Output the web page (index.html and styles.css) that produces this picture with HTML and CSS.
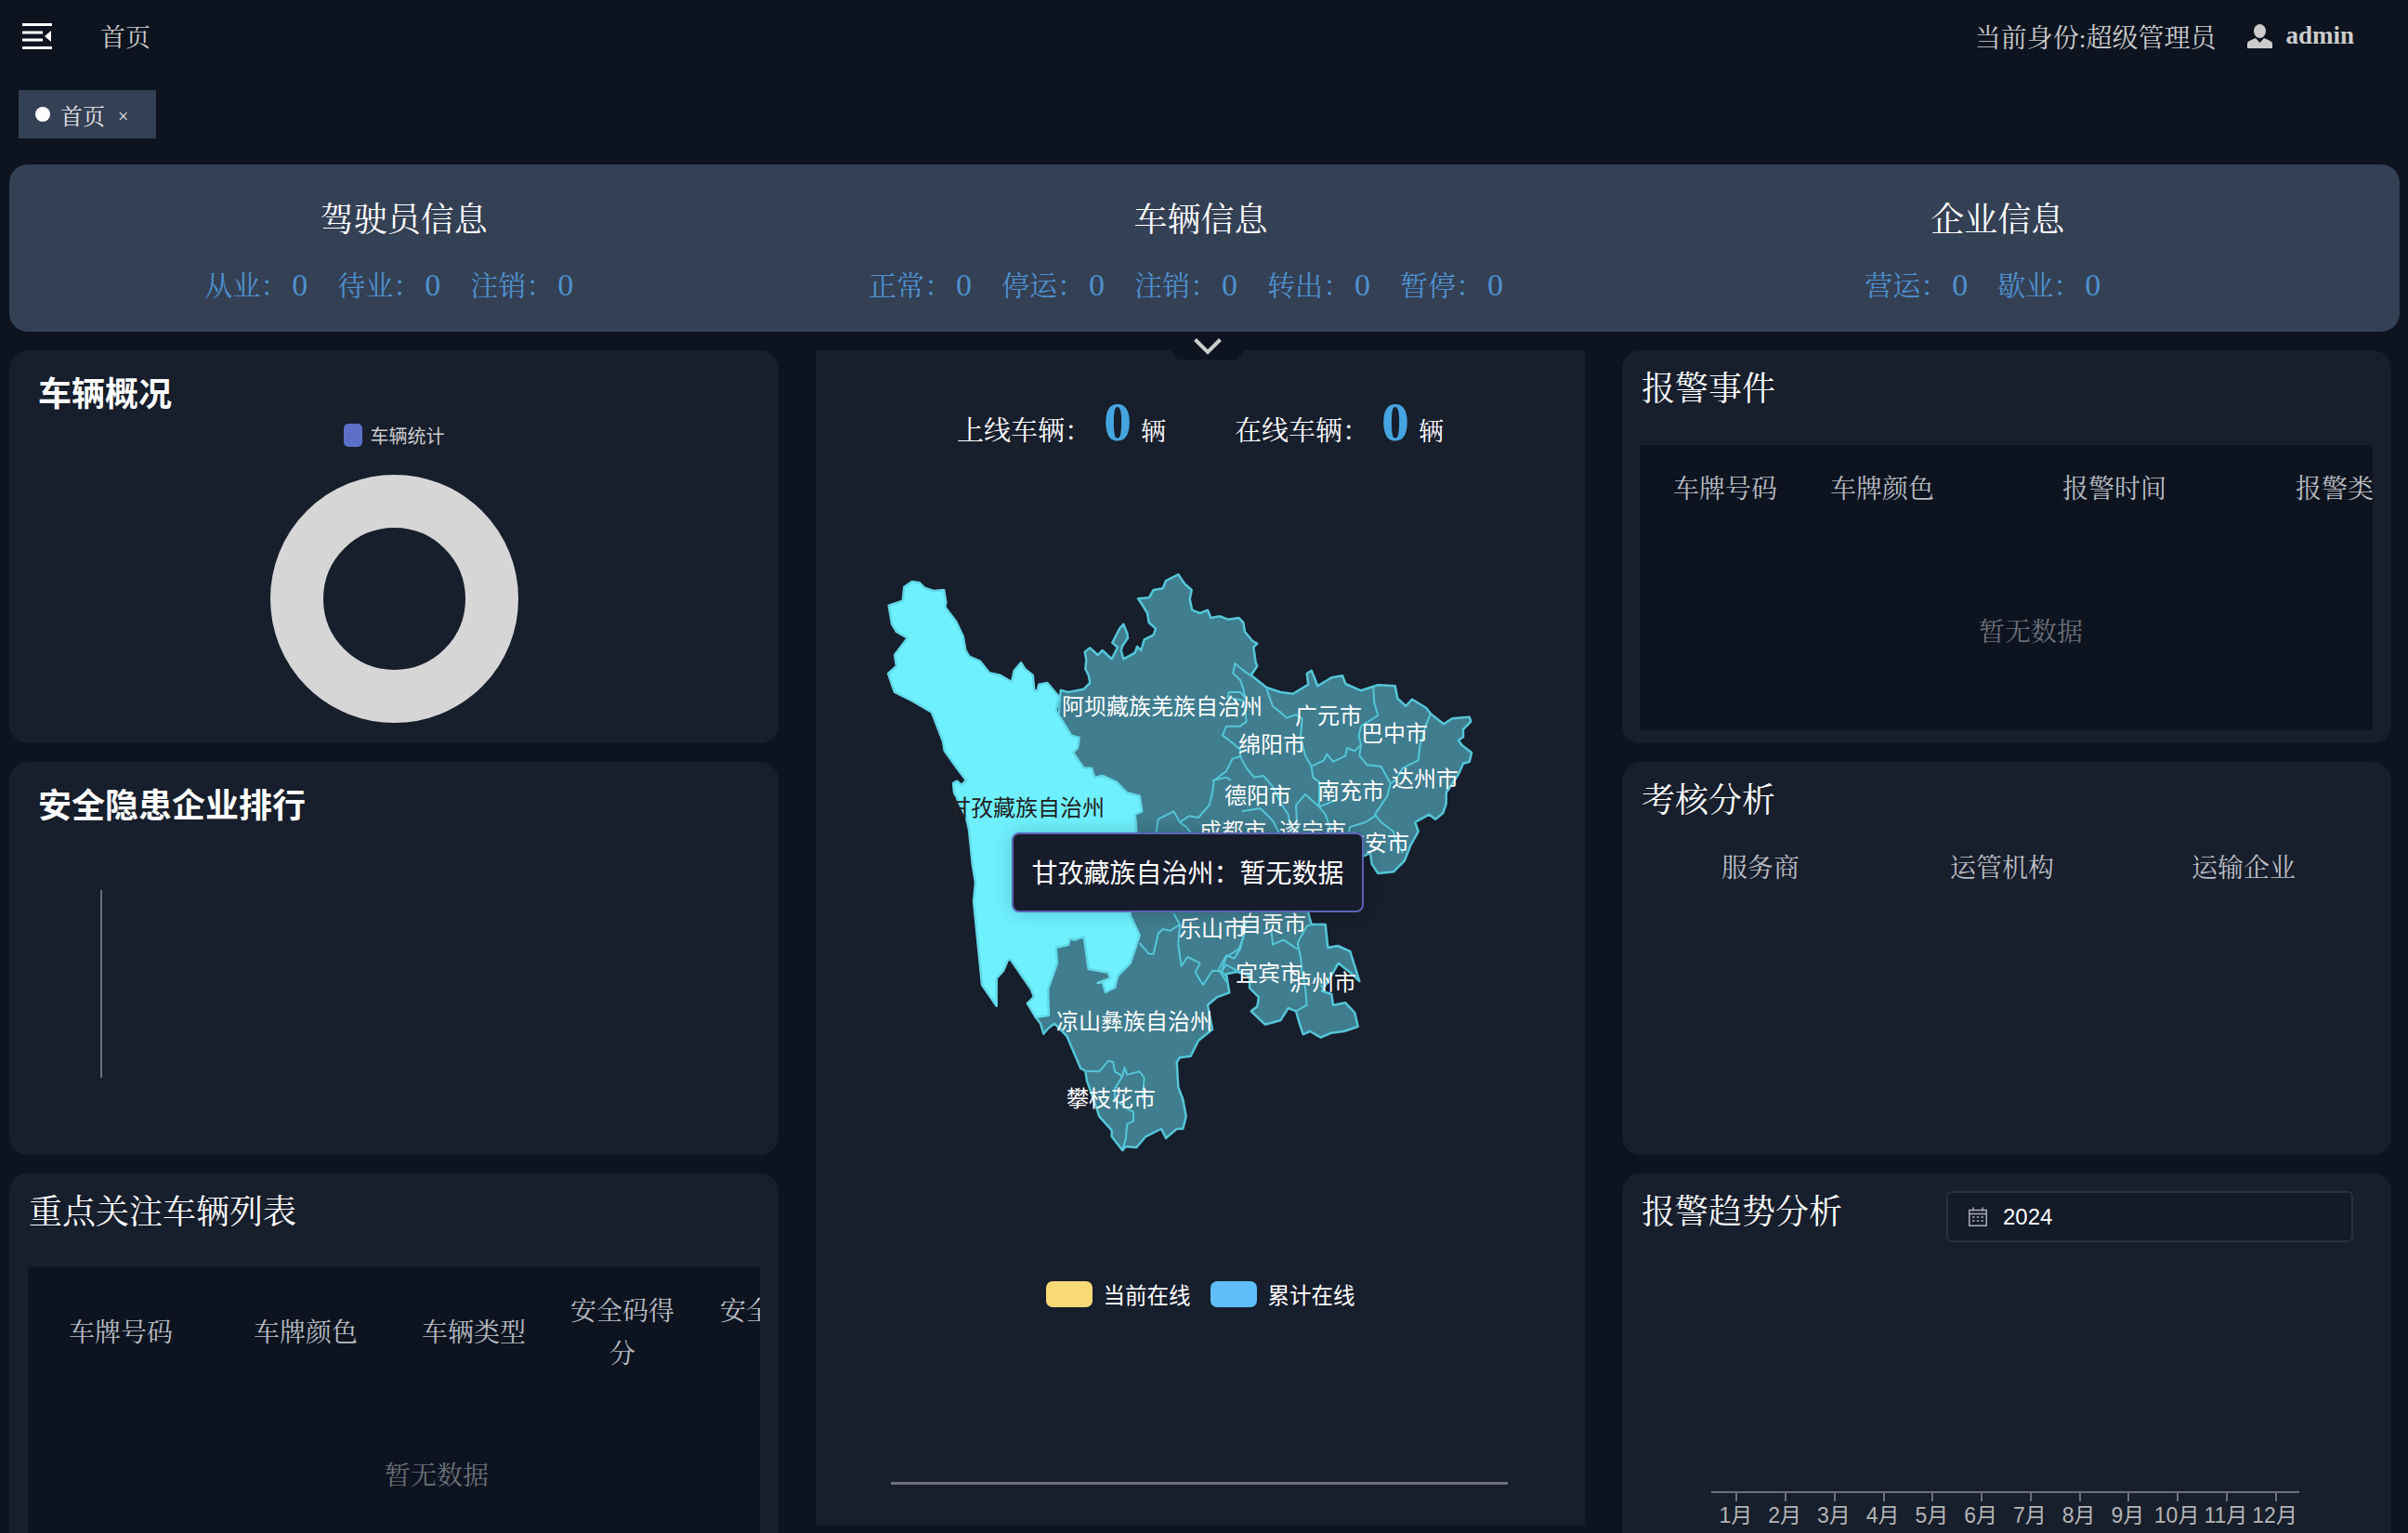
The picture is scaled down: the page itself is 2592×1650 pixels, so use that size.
FILE: index.html
```html
<!DOCTYPE html>
<html lang="zh-CN">
<head>
    <meta charset="UTF-8">
    <title>首页</title>
    <link rel="stylesheet" href="styles.css">
</head>
<body>
    <!-- Top bar -->
    <header class="topbar">
        <div class="topbar-left">
            <svg class="fold-icon" width="32" height="28" viewBox="0 0 32 28">
                <path d="M0 0h32v3H0zM0 8.500h22v3H0zM0 16.500h22v3H0zM0 25h32v3H0z" fill="#fff"/>
                <path d="M31 8v12l-7-6z" fill="#fff"/>
            </svg>
            <span class="crumb">首页</span>
        </div>
        <div class="topbar-right">
            <span class="role">当前身份:超级管理员</span>
            <svg class="user-icon" width="27" height="26" viewBox="0 0 27 26">
                <ellipse cx="13.500" cy="7.500" rx="6.500" ry="7.500" fill="#ccc"/>
                <path d="M0 26v-5c0-3 5-4 9-6l4.500 5 4.500-5c4 2 9 3 9 6v5z" fill="#ccc"/>
            </svg>
            <span class="user-name">admin</span>
        </div>
    </header>

    <!-- Tags -->
    <div class="tags">
        <div class="tag"><i class="tag-dot"></i>首页<span class="tag-close">×</span></div>
    </div>

    <!-- Summary banner -->
    <section class="banner">
        <div class="banner-item">
            <h2>驾驶员信息</h2>
            <div class="banner-stats">
                <span>从业：<b>0</b></span><span>待业：<b>0</b></span><span>注销：<b>0</b></span>
            </div>
        </div>
        <div class="banner-item">
            <h2>车辆信息</h2>
            <div class="banner-stats">
                <span>正常：<b>0</b></span><span>停运：<b>0</b></span><span>注销：<b>0</b></span><span>转出：<b>0</b></span><span>暂停：<b>0</b></span>
            </div>
        </div>
        <div class="banner-item">
            <h2>企业信息</h2>
            <div class="banner-stats">
                <span>营运：<b>0</b></span><span>歇业：<b>0</b></span>
            </div>
        </div>
    </section>

    <main class="board">
        <!-- Left column -->
        <div class="column">
            <section class="card">
                <h3 class="card-title-bold">车辆概况</h3>
                <div class="donut-legend"><i></i>车辆统计</div>
                <div class="donut"></div>
            </section>
            <section class="card">
                <h3 class="card-title-bold">安全隐患企业排行</h3>
                <div class="rank-axis"></div>
            </section>
            <section class="card">
                <h3 class="card-title">重点关注车辆列表</h3>
                <div class="table table-focus">
                    <div class="table-head">
                        <div>车牌号码</div><div>车牌颜色</div><div>车辆类型</div><div>安全码得分</div><div>安全码状态</div>
                    </div>
                    <div class="table-empty">暂无数据</div>
                </div>
            </section>
        </div>

        <!-- Center column -->
        <section class="card card-center">
            <div class="collapse-tab">
                <svg width="30" height="18" viewBox="0 0 30 18"><path d="M1.500 1.500L15 15 28.500 1.500" fill="none" stroke="#ccc" stroke-width="4"/></svg>
            </div>
            <div class="online-stats">
                <div class="online-item">上线车辆：<b>0</b><span>辆</span></div>
                <div class="online-item">在线车辆：<b>0</b><span>辆</span></div>
            </div>

            <div class="map">
                <svg width="660" height="640" viewBox="940 610 660 640">
                    <!-- province -->
                    <path class="map-land" d="M1141.700 743L1150 745 1166.700 741.700 1173.300 735 1171.700 726.700 1168.300 720 1169.300 710 1167.700 701.700 1173.300 697.300 1181.700 705 1186.700 700 1196.700 709.300 1203 696.700 1197.300 691.700 1205 676.700 1209.300 671.700 1213.300 681.700 1214 686.700 1208.300 695 1206.700 700 1209.300 709.300 1221.700 702.700 1224 696 1228.300 700 1231.700 688.300 1241.700 683.300 1244 676.700 1236.700 670 1235 660 1230 651.700 1225 644.300 1236.700 643.300 1241.700 635 1251.700 633.300 1255 625 1268.300 618.300 1275 628.300 1282.700 635 1280.700 645 1283.300 656.700 1291.700 660 1300 656.700 1303.300 665 1313.300 663.300 1321.700 666.700 1333.300 665 1338.300 670 1340 680 1348.300 690 1353.300 692.700 1349.300 696.700 1351.700 713.300 1353.300 716.700 1346.700 726.700 1363.300 740 1378.300 745 1391.700 746.700 1408.300 736.700 1406.700 725 1411.700 721.700 1418.300 738.300 1433.300 729.300 1445 727.300 1448.300 736 1465 743.300 1483.300 737.300 1501.700 738.300 1504.300 751.700 1513.300 760 1520 752.700 1535 761.700 1540 768.300 1554 779.300 1563.300 773.300 1581.700 771.700 1583.300 776.700 1575 785 1575 793.300 1570 796.700 1573.300 801.700 1584 810 1581.700 820 1575 821.700 1570 833.300 1556.700 853.300 1556.700 865 1553.300 875 1545 881.700 1538.300 876.700 1523.300 885 1526.700 895 1518.300 910 1511.700 926.700 1500 938.300 1483.300 940 1476.700 930 1475 918 1460 925 1408 981.700 1411.700 995 1426.700 995 1429.300 1020 1440 1018 1453.300 1024 1458.300 1040 1463.300 1056 1453.300 1046.700 1440.700 1036.700 1433 1050 1423 1066.700 1433.300 1070 1435 1081.700 1448.300 1079.300 1458.300 1090 1461.700 1105 1446.700 1110 1433.300 1111.700 1421.700 1116.700 1410 1110 1402.700 1113.300 1398.300 1100 1395 1088.300 1386.700 1085 1378.300 1098.300 1361.700 1102.700 1346.700 1088.300 1353.300 1083.300 1355 1073.300 1345 1063.300 1345 1050 1331.700 1046 1320 1048.300 1323.300 1068.300 1310 1073.300 1300 1081.700 1305 1108 1290 1120 1281.700 1136.700 1270 1138.300 1266.700 1143.300 1268.300 1170 1273.300 1183.300 1276.700 1201.700 1273.300 1215 1266.700 1215 1255 1225 1250 1215 1233.300 1223.300 1223.300 1235 1211.700 1234 1208.300 1238.300 1196.700 1223.300 1196.700 1216.700 1183.300 1201.700 1178.300 1186.700 1170 1163.300 1168.300 1152.700 1163.300 1150 1153.300 1126.700 1148.300 1115 1135 1101.700 1128.300 1106.700 1123.300 1112.700 1120 1101.700 1115 1095Z"/>

                    <!-- county borders, in crop units of the map quadrants -->
                    <g transform="translate(1270 610) scale(.3333)">
                        <path class="map-line" d="M230 352L205 335 178 312 172 345 195 365 205 395 212 425 195 405 158 405 155 422 205 432 212 470 215 500 195 515 150 515 138 545 165 565 195 590 195 612 170 620 150 660 110 690 105 730 95 770 60 810 30 805 0 825 20 840 35 858M0 825L-20 790 -70 815 -75 850 -80 880"/>
                        <path class="map-line" d="M280 395L300 450 325 470 345 488 375 478 395 490 390 550 405 610 425 645 465 625 475 605 495 630 535 610 540 585 565 595 585 575 578 545 585 515 640 480 628 440 625 390"/>
                        <path class="map-line" d="M585 575L580 610 605 640 650 645 680 700M810 475L795 510 775 580 770 625 720 650 695 690 680 700 670 740 630 800 650 825 690 855 695 880 720 925M630 805L600 825 550 840 545 858M425 645L430 680 450 695 450 775"/>
                        <path class="map-line" d="M195 612L215 650 240 680 270 675 300 710 330 770 350 800 360 858M105 690L150 680 165 690M200 790L260 780 300 820 320 858M380 855L375 770 405 735 450 775 470 800 490 858M450 775L500 755"/>
                    </g>
                    <g transform="translate(1000 930) scale(.3333)">
                        <path class="map-line" d="M680 255L710 290 725 290 740 225 755 210 780 215 810 195 805 260 815 330 835 300 875 320 860 350 885 390 915 345 945 345 965 370M945 345L960 300 1000 275 1015 240 1025 180M810 195L790 160"/>
                        <path class="map-line" d="M510 668L550 670 580 635 595 640 600 670 625 685 600 725 600 760 640 790 660 800 660 830 640 840 635 890 625 920M630 655L640 680 680 670 695 690 690 760M625 685L632 655"/>
                    </g>
                    <g transform="translate(1270 900) scale(.3333)">
                        <path class="map-line" d="M380 345L390 390 395 440 405 490 410 545 375 565M295 300L300 350 335 335 380 365M380 345L410 290 425 285M205 320L195 365 175 395 150 385 125 430 150 470M135 435L150 415 185 435 225 450M470 500L455 480"/>
                    </g>

                    <!-- highlighted region -->
                    <path class="map-active" d="M973.300 631.700L981.700 626 990 627.300 995 632.700 1005 636 1016 635 1018.300 648.300 1017.300 653.300 1029.300 669.300 1036.700 685 1039.300 700 1043.300 706.700 1055 711.700 1065 724.300 1076.700 726.700 1089 734 1091.700 721.700 1099 713.300 1103.300 720 1111.700 726.700 1113.300 743.300 1116.700 743.300 1118.300 736.700 1127.300 735 1140 750 1136.700 765 1146 780 1153.300 791.700 1161.700 794 1160 805 1155 810 1166.700 826.700 1175 826.700 1178.300 836.700 1186.700 835 1201.700 841.700 1213.300 853.300 1226.700 856.700 1229.300 873.300 1221.700 876.700 1223.300 893 1216.700 985 1226.700 1006.700 1216.700 1036.700 1203.300 1050 1200 1063 1190 1068 1186.700 1056.700 1181.700 1058 1195 1053 1193 1046.700 1171.700 1043 1166.700 1008 1156.700 1011.700 1151.700 1010 1150 1017 1136.700 1020 1138 1036.700 1128 1065 1129 1092.700 1115 1095 1106 1080 1113 1073 1110 1065 1088 1033 1085 1033 1080 1045 1072.700 1053 1072.700 1082.700 1057 1060 1054 1030 1048 970 1050 950 1046.700 930 1043 893 1040 880 1027 853 1026 843 1030 840.700 1035 845 1040 840 1030 826.700 1016.700 808 1015 798 1003 766.700 983 755 963 745 956 725 965 717 963 705 976.700 686.700 965 680 960 671.700 956.700 651.700 971.700 646.700Z"/>

                    <!-- labels -->
                    <text x="1251" y="769">阿坝藏族羌族自治州</text>
                    <text x="1430" y="779">广元市</text>
                    <text x="1501" y="798">巴中市</text>
                    <text x="1369" y="810">绵阳市</text>
                    <text x="1534" y="847">达州市</text>
                    <text x="1454" y="860">南充市</text>
                    <text x="1354" y="865">德阳市</text>
                    <text x="1327" y="903">成都市</text>
                    <text x="1413" y="903">遂宁市</text>
                    <text x="1481" y="916">广安市</text>
                    <text class="map-label-active" x="1105" y="878">甘孜藏族自治州</text>
                    <text x="1305" y="1008">乐山市</text>
                    <text x="1370" y="1003">自贡市</text>
                    <text x="1366" y="1056">宜宾市</text>
                    <text x="1424" y="1066">泸州市</text>
                    <text x="1221" y="1108">凉山彝族自治州</text>
                    <text x="1196" y="1191">攀枝花市</text>
                </svg>
                <div class="map-tooltip">甘孜藏族自治州：暂无数据</div>
            </div>

            <div class="map-legend">
                <div class="map-legend-item"><i class="swatch-yellow"></i>当前在线</div>
                <div class="map-legend-item"><i class="swatch-blue"></i>累计在线</div>
            </div>
            <div class="center-axis"></div>
        </section>

        <!-- Right column -->
        <div class="column">
            <section class="card">
                <h3 class="card-title">报警事件</h3>
                <div class="table table-alarm">
                    <div class="table-head">
                        <div>车牌号码</div><div>车牌颜色</div><div>报警时间</div><div>报警类型</div>
                    </div>
                    <div class="table-empty">暂无数据</div>
                </div>
            </section>
            <section class="card">
                <h3 class="card-title">考核分析</h3>
                <div class="tabs">
                    <div>服务商</div><div>运管机构</div><div>运输企业</div>
                </div>
            </section>
            <section class="card">
                <div class="trend-head">
                    <h3 class="card-title">报警趋势分析</h3>
                    <div class="year-picker">
                        <svg width="20" height="21" viewBox="0 0 20 21" fill="none" stroke="#aab" stroke-width="1.500">
                            <path d="M.800 3.500h18.400v16.700H.800zM.800 7.500h18.400M5 .500v4M15 .500v4"/>
                            <path d="M4 11h2.500M8.800 11h2.500M13.500 11H16M4 15h2.500M8.800 15h2.500M13.500 15H16"/>
                        </svg>
                        2024
                    </div>
                </div>
                <div class="month-axis">
                    <div>1月</div><div>2月</div><div>3月</div><div>4月</div><div>5月</div><div>6月</div>
                    <div>7月</div><div>8月</div><div>9月</div><div>10月</div><div>11月</div><div>12月</div>
                </div>
            </section>
        </div>
    </main>
</body>
</html>
```

FILE: styles.css
```css
/* Reset */
body, h2, h3 {
    margin: 0;
    padding: 0;
}

body {
    width: 2592px;
    height: 1650px;
    overflow: hidden;
    background-color: #0d1420;
    color: #fff;
    font-family: "Liberation Serif", "Noto Serif CJK SC", "Noto Sans CJK SC", serif;
    font-size: 28px;
}

h2, h3 {
    font-weight: normal;
}

/* Top bar */
.topbar {
    height: 97px;
    box-sizing: border-box;
    padding: 0 58px 20px 24px;
    display: flex;
    align-items: center;
    justify-content: space-between;
    color: #ccc;
    font-size: 27px;
}

.topbar-left,
.topbar-right {
    display: flex;
    align-items: center;
}

.crumb {
    margin-left: 52px;
}

.role {
    font-size: 28px;
}

.user-icon {
    margin-left: 34px;
}

.user-name {
    margin-left: 14px;
    font-weight: bold;
}

/* Tags */
.tags {
    padding-left: 20px;
    height: 80px;
}

.tag {
    width: 148px;
    height: 52px;
    box-sizing: border-box;
    padding-left: 18px;
    display: flex;
    align-items: center;
    background-color: #344054;
    color: #e6e6e6;
    font-size: 24px;
}

.tag-dot {
    width: 16px;
    height: 16px;
    margin-right: 11px;
    border-radius: 50%;
    background-color: #fff;
}

.tag-close {
    margin: 4px 0 0 14px;
    font-size: 20px;
}

/* Banner */
.banner {
    width: 2573px;
    height: 180px;
    margin-left: 10px;
    display: grid;
    grid-template-columns: repeat(3, 1fr);
    border-radius: 20px;
    background-color: #344054;
}

.banner-item {
    padding-right: 8px;
    text-align: center;
}

.banner-item h2 {
    margin-top: 38px;
    font-size: 36px;
    line-height: 44px;
}

.banner-stats {
    margin-top: 27px;
    display: flex;
    justify-content: center;
    color: #4f90cf;
    font-size: 30px;
    line-height: 44px;
}

.banner-stats span {
    margin-right: 32px;
}

.banner-stats b {
    margin-left: 4px;
    font-size: 34px;
    font-weight: normal;
    line-height: 1;
}

/* Board */
.board {
    margin: 20px 0 0 10px;
    display: grid;
    grid-template-columns: repeat(3, 828px);
    column-gap: 40px;
    align-items: start;
}

.column {
    display: flex;
    flex-direction: column;
    gap: 20px;
}

.card {
    position: relative;
    height: 423px;
    flex-shrink: 0;
    border-radius: 20px;
    background-color: #171e2c;
}

.card-title {
    padding: 24px 0 0 21px;
    font-size: 36px;
    line-height: 36px;
}

.card-title-bold {
    padding: 26px 0 0 31px;
    font-family: "Noto Sans CJK SC", sans-serif;
    font-size: 36px;
    font-weight: bold;
    line-height: 36px;
}

/* Vehicle donut */
.donut-legend {
    margin-top: 17px;
    display: flex;
    align-items: center;
    justify-content: center;
    color: #ccc;
    font-family: "Noto Sans CJK SC", sans-serif;
    font-size: 20px;
    line-height: 25px;
}

.donut-legend i {
    width: 20px;
    height: 25px;
    margin-right: 9px;
    border-radius: 5px;
    background-color: #5b6fc9;
}

.donut {
    width: 267px;
    height: 267px;
    box-sizing: border-box;
    margin: 30px auto 0;
    border: 57px solid #d6d6d6;
    border-radius: 50%;
}

.rank-axis {
    width: 2px;
    height: 202px;
    margin: 76px 0 0 98px;
    background-color: #6e7079;
}

/* Tables */
.table {
    overflow: hidden;
    background-color: #0d1420;
    color: #b9bcc2;
}

.table-head {
    display: grid;
    align-items: center;
    text-align: center;
    line-height: 46px;
}

.table-head div {
    padding: 0 20px;
}

.table-empty {
    display: flex;
    align-items: center;
    justify-content: center;
    color: #6b6f78;
}

.table-focus {
    width: 788px;
    height: 340px;
    margin: 41px 0 0 20px;
}

.table-focus .table-head {
    grid-template-columns: 200px 198px 164px 156px 166px;
    height: 142px;
}

.table-focus .table-empty {
    width: 880px;
    height: 160px;
}

.table-alarm {
    width: 789px;
    height: 307px;
    margin: 42px 0 0 19px;
}

.table-alarm .table-head {
    grid-template-columns: 184px 154px 346px 156px;
    height: 95px;
}

.table-alarm .table-empty {
    width: 842px;
    height: 208px;
}

/* Assessment tabs */
.tabs {
    margin: 35px 0 0 19px;
    display: grid;
    grid-template-columns: repeat(3, 260px);
    color: #b9bcc2;
    line-height: 40px;
    text-align: center;
}

/* Trend */
.trend-head {
    display: flex;
    justify-content: space-between;
    padding: 19px 41px 0 0;
}

.trend-head .card-title {
    padding-top: 5px;
}

.year-picker {
    width: 438px;
    height: 55px;
    box-sizing: border-box;
    padding-left: 22px;
    display: flex;
    align-items: center;
    gap: 17px;
    border: 2px solid #263240;
    border-radius: 6px;
    background-color: #141b28;
    font-family: "Liberation Sans", sans-serif;
    font-size: 24px;
}

.month-axis {
    width: 633px;
    margin: 268px 0 0 96px;
    display: grid;
    grid-template-columns: repeat(12, 1fr);
    border-top: 2px solid #6e7079;
    color: #b5b5b5;
    font-family: "Liberation Sans", "Noto Sans CJK SC", sans-serif;
    font-size: 23px;
    text-align: center;
}

.month-axis div {
    position: relative;
    padding-top: 13px;
    line-height: 22px;
    white-space: nowrap;
}

/* tick mark of the axis */
.month-axis div::before {
    content: "";
    position: absolute;
    top: 0;
    left: 50%;
    width: 2px;
    height: 9px;
    background-color: #6e7079;
}

/* Center column */
.card-center {
    height: 1265px;
    border-radius: 0;
}

.collapse-tab {
    position: absolute;
    top: -13px;
    left: 382px;
    width: 79px;
    height: 23px;
    display: flex;
    justify-content: center;
    background-color: #0d1420;
    clip-path: polygon(0 0, 100% 0, 100% 56%, 90% 100%, 10% 100%, 0 56%);
}

.online-stats {
    height: 110px;
    padding-top: 47px;
    box-sizing: border-box;
    display: flex;
    justify-content: center;
    gap: 74px;
    font-size: 29px;
}

.online-item {
    display: flex;
    align-items: baseline;
    height: 60px;
}

.online-item b {
    margin: 0 10px 0 13px;
    color: #45a5e0;
    font-size: 60px;
    line-height: 60px;
}

.online-item span {
    font-size: 27px;
}

.map {
    position: relative;
    width: 660px;
    height: 640px;
    margin: 123px 0 0 62px;
}

.map svg {
    display: block;
}

.map-land {
    fill: #3f7d8f;
    stroke: #55c6d8;
    stroke-width: 2.500;
    stroke-linejoin: round;
}

.map-line {
    fill: none;
    stroke: #55c6d8;
    stroke-width: 2;
    stroke-linejoin: round;
    vector-effect: non-scaling-stroke;
}

.map-active {
    fill: #6ff0fe;
    stroke: #62d8e8;
    stroke-width: 2.500;
    stroke-linejoin: round;
}

.map text {
    fill: #fff;
    font-family: "Noto Sans CJK SC", sans-serif;
    font-size: 24px;
    text-anchor: middle;
}

.map text.map-label-active {
    fill: #222;
}

.map-tooltip {
    position: absolute;
    left: 149px;
    top: 286px;
    width: 379px;
    height: 86px;
    box-sizing: border-box;
    padding-bottom: 3px;
    display: flex;
    align-items: center;
    justify-content: center;
    border: 2px solid #5b64b5;
    border-radius: 8px;
    background-color: #171c2b;
    box-shadow: 0 0 20px rgba(0, 0, 0, 0.2);
    font-family: "Noto Sans CJK SC", sans-serif;
    font-size: 28px;
    white-space: nowrap;
}

.map-legend {
    margin-top: 129px;
    display: flex;
    justify-content: center;
    gap: 21px;
    font-family: "Noto Sans CJK SC", sans-serif;
    font-size: 23.500px;
    line-height: 28px;
}

.map-legend-item {
    display: flex;
    align-items: center;
    gap: 12px;
}

.map-legend-item i {
    width: 50px;
    height: 28px;
    border-radius: 7px;
}

.swatch-yellow {
    background-color: #f8d976;
}

.swatch-blue {
    background-color: #5fbef8;
}

.center-axis {
    width: 664px;
    height: 3px;
    margin: 188px 0 0 81px;
    background-color: #6e7079;
}
```
